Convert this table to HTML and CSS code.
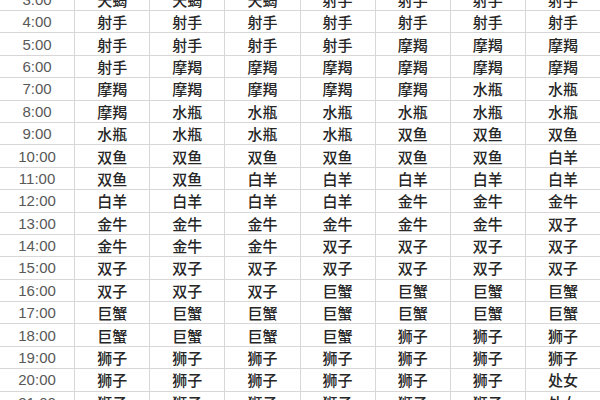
FILE: index.html
```html
<!DOCTYPE html>
<html lang="zh-CN">
<head>
<meta charset="utf-8">
<title>上升星座时间表</title>
<link rel="stylesheet" href="styles.css">
</head>
<body>
<div class="viewport">
  <div class="grid" id="grid"></div>
</div>
<script>
const rows = [
  ["3:00","天蝎","天蝎","天蝎","射手","射手","射手","射手"],
  ["4:00","射手","射手","射手","射手","射手","射手","射手"],
  ["5:00","射手","射手","射手","射手","摩羯","摩羯","摩羯"],
  ["6:00","射手","摩羯","摩羯","摩羯","摩羯","摩羯","摩羯"],
  ["7:00","摩羯","摩羯","摩羯","摩羯","摩羯","水瓶","水瓶"],
  ["8:00","摩羯","水瓶","水瓶","水瓶","水瓶","水瓶","水瓶"],
  ["9:00","水瓶","水瓶","水瓶","水瓶","双鱼","双鱼","双鱼"],
  ["10:00","双鱼","双鱼","双鱼","双鱼","双鱼","双鱼","白羊"],
  ["11:00","双鱼","双鱼","白羊","白羊","白羊","白羊","白羊"],
  ["12:00","白羊","白羊","白羊","白羊","金牛","金牛","金牛"],
  ["13:00","金牛","金牛","金牛","金牛","金牛","金牛","双子"],
  ["14:00","金牛","金牛","金牛","双子","双子","双子","双子"],
  ["15:00","双子","双子","双子","双子","双子","双子","双子"],
  ["16:00","双子","双子","双子","巨蟹","巨蟹","巨蟹","巨蟹"],
  ["17:00","巨蟹","巨蟹","巨蟹","巨蟹","巨蟹","巨蟹","巨蟹"],
  ["18:00","巨蟹","巨蟹","巨蟹","巨蟹","狮子","狮子","狮子"],
  ["19:00","狮子","狮子","狮子","狮子","狮子","狮子","狮子"],
  ["20:00","狮子","狮子","狮子","狮子","狮子","狮子","处女"],
  ["21:00","狮子","狮子","狮子","狮子","狮子","狮子","处女"]
];
const grid = document.getElementById('grid');
rows.forEach(r => {
  r.forEach((v, i) => {
    const c = document.createElement('div');
    c.className = i === 0 ? 'cell time' : 'cell sign';
    c.textContent = v;
    grid.appendChild(c);
  });
});
</script>
</body>
</html>
```

FILE: styles.css
```css
html, body {
  margin: 0;
  padding: 0;
  background: #ffffff;
}
.viewport {
  width: 600px;
  height: 400px;
  overflow: hidden;
}
.grid {
  margin-top: -11.4px;
  display: grid;
  grid-template-columns: repeat(8, 1fr);
  grid-auto-rows: 21.4px;
  gap: 1px;
  width: 600px;
  background: #d8d6d6;
}
.cell {
  background: #ffffff;
  display: flex;
  align-items: center;
  justify-content: center;
  font-size: 15px;
  line-height: 1;
}
.time {
  font-family: "Liberation Sans", Arial, sans-serif;
  color: #585858;
}
.sign {
  font-family: "Noto Sans CJK SC", "Liberation Sans", sans-serif;
  font-weight: 500;
  color: #262626;
}
```
